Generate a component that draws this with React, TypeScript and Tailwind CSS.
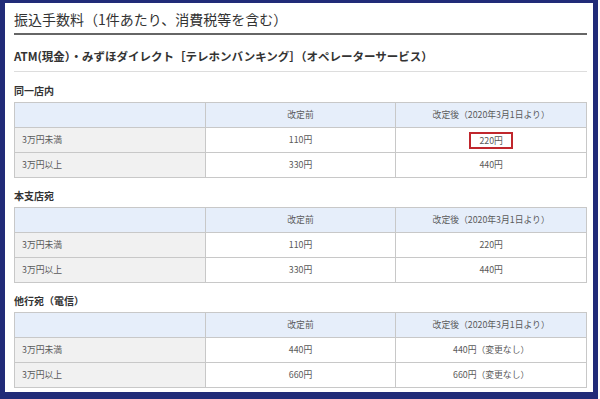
import React from 'react';

const FONT = { fontFamily: '"Noto Sans CJK JP", "Noto Sans", sans-serif' };

type Row = { label: string; before: string; after: string; highlight?: boolean };

const sections: { title: string; rows: Row[] }[] = [
  {
    title: '同一店内',
    rows: [
      { label: '3万円未満', before: '110円', after: '220円', highlight: true },
      { label: '3万円以上', before: '330円', after: '440円' },
    ],
  },
  {
    title: '本支店宛',
    rows: [
      { label: '3万円未満', before: '110円', after: '220円' },
      { label: '3万円以上', before: '330円', after: '440円' },
    ],
  },
  {
    title: '他行宛（電信）',
    rows: [
      { label: '3万円未満', before: '440円', after: '440円（変更なし）' },
      { label: '3万円以上', before: '660円', after: '660円（変更なし）' },
    ],
  },
];

const FeeTable = ({ rows }: { rows: Row[] }) => (
  <table className="w-full table-fixed border-collapse text-[8.8px] text-[#5a5a5a]">
    <thead>
      <tr className="h-[25px] bg-[#e6eefa]">
        <th className="border border-[#c8c8c8] font-normal"></th>
        <th className="border border-[#c8c8c8] font-normal">改定前</th>
        <th className="border border-[#c8c8c8] font-normal">改定後（2020年3月1日より）</th>
      </tr>
    </thead>
    <tbody>
      {rows.map((r) => (
        <tr key={r.label} className="h-[25px]">
          <td className="border border-[#c8c8c8] bg-[#f1f1f1] pl-[7px]">{r.label}</td>
          <td className="border border-[#c8c8c8] bg-white text-center">{r.before}</td>
          <td className="border border-[#c8c8c8] bg-white text-center">
            {r.highlight ? (
              <span className="inline-block border-2 border-[#c0272d] px-[8px] leading-[13px]">{r.after}</span>
            ) : (
              r.after
            )}
          </td>
        </tr>
      ))}
    </tbody>
  </table>
);

export default function App() {
  return (
    <div className="w-[600px] h-[399px] bg-white overflow-hidden" style={FONT}>
      <div className="w-[598px] h-[399px] border-l-[5px] border-t-[3px] border-r-[5px] border-b-[7px] border-[#212b78] pl-[9px] pr-[6px] pt-[5px] bg-white">
        <h1 className="text-[14px] leading-[22px] text-[#333] mb-[3px]">振込手数料（1件あたり、消費税等を含む）</h1>
        <div className="h-[2px] bg-[#666]" />
        <h2 className="mt-[11px] text-[11.5px] leading-[20px] font-bold text-[#333] pb-[5px] border-b border-[#ddd]">
          ATM(現金）・みずほダイレクト［テレホンバンキング］（オペレーターサービス）
        </h2>
        {sections.map((s, i) => (
          <div key={s.title}>
            <h3
              className={`${i === 0 ? 'mt-[12px]' : 'mt-[11px]'} mb-[4px] text-[10px] leading-[14px] font-bold text-[#333]`}
            >
              {s.title}
            </h3>
            <FeeTable rows={s.rows} />
          </div>
        ))}
      </div>
    </div>
  );
}
